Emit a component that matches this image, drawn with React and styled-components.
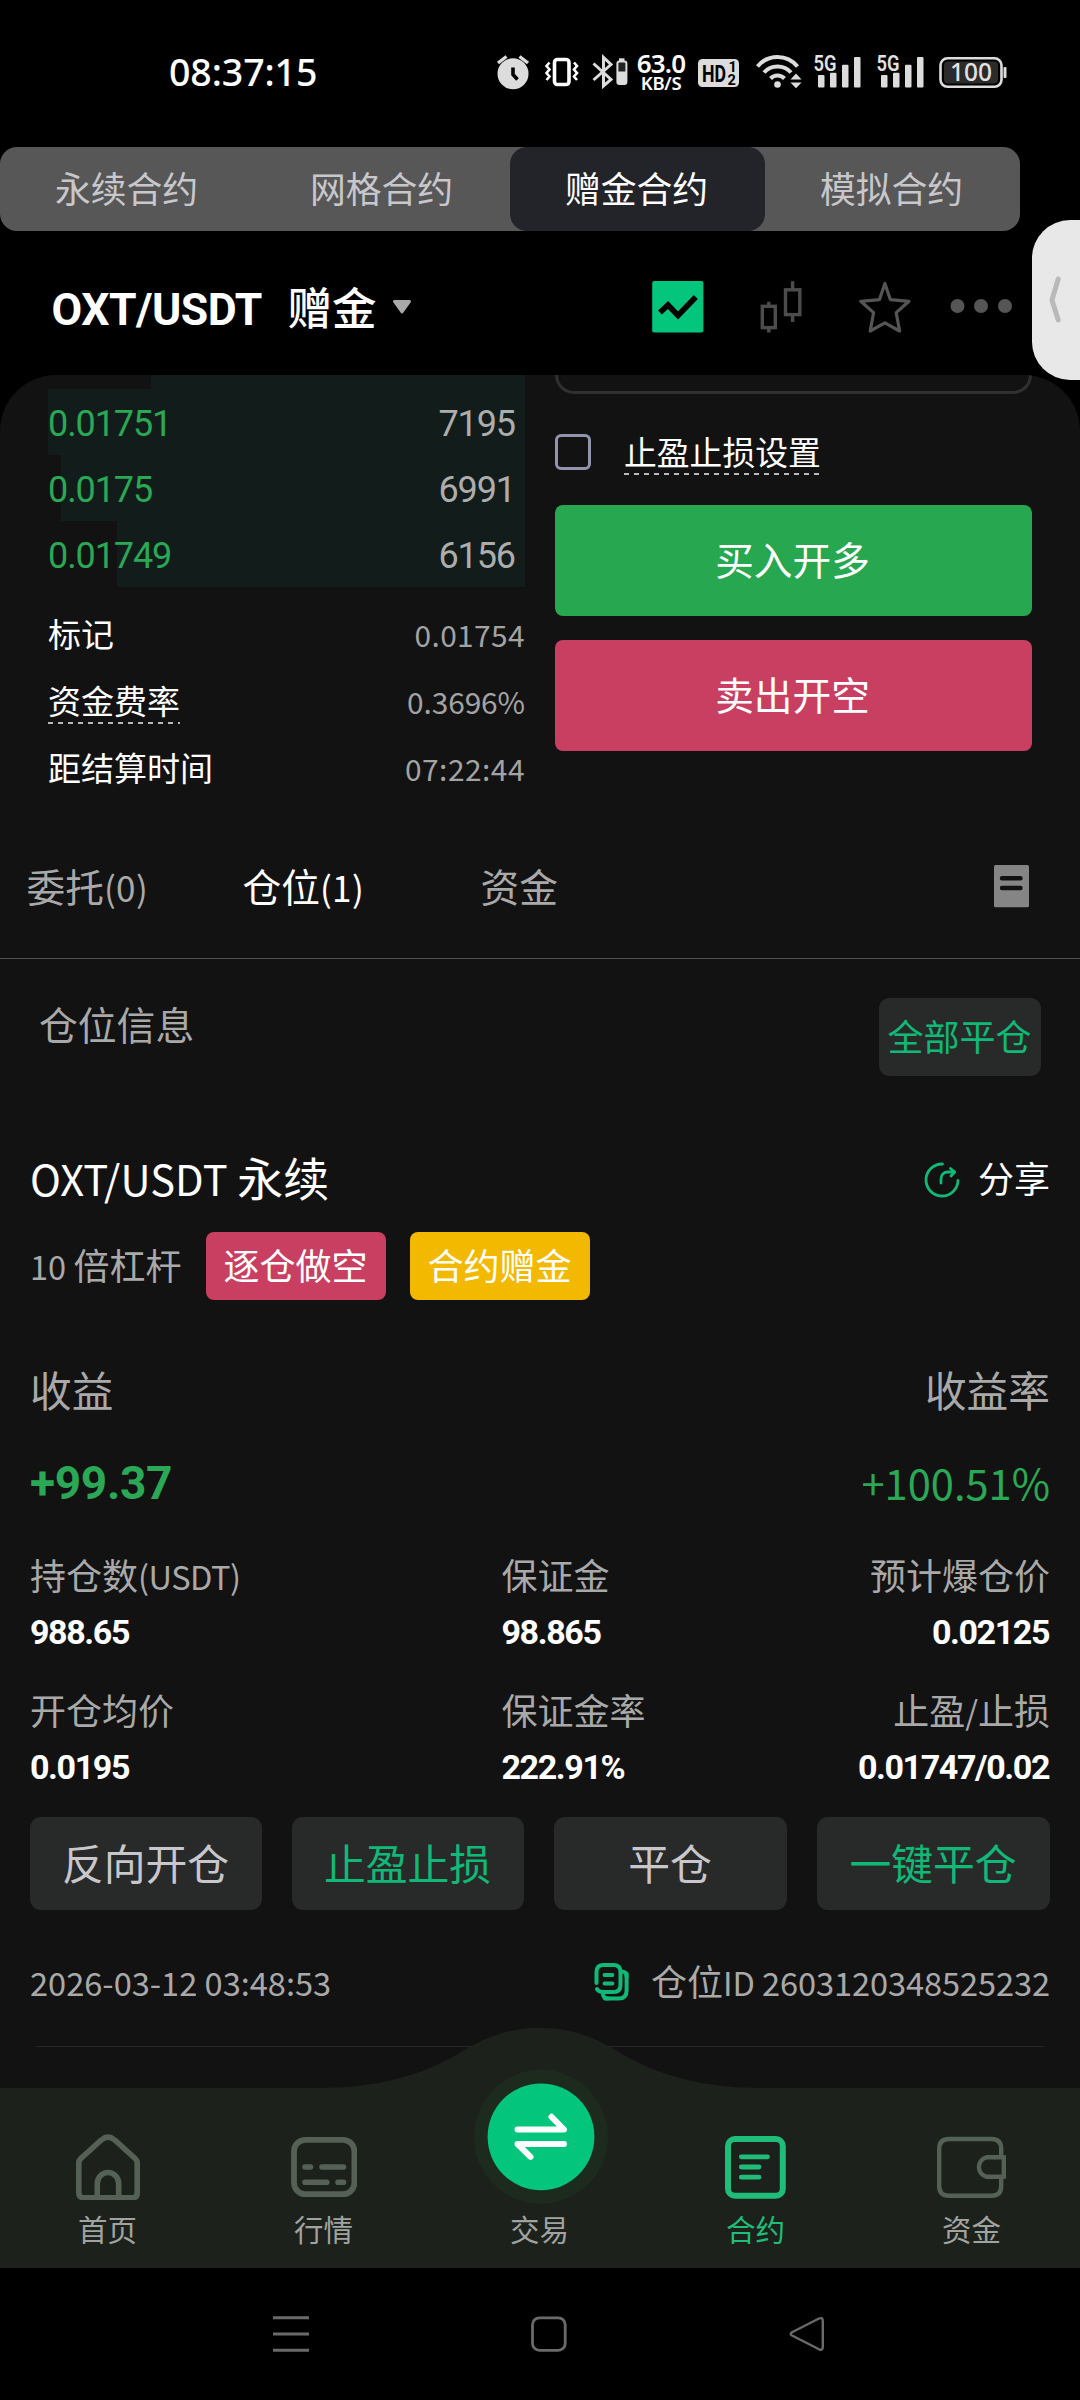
import React from 'react';
import styled, { createGlobalStyle } from 'styled-components';

const c = {
  page: '#000000',
  panel: '#121212',
  nav: '#1c211c',
  white: '#ffffff',
  muted: '#a9a9a9',
  lilac: '#c8c7cc',
  up: '#26a750',
  down: '#c93f62',
  accent: '#10b977',
  vivid: '#03c57b',
  gold: '#f3b900',
  chip: '#282929',
  navIcon: '#546154',
};

const GlobalStyle = createGlobalStyle`
  * { box-sizing: border-box; }
  html, body { margin: 0; padding: 0; background: ${c.page}; }
  body {
    width: 1080px;
    font-family: 'Noto Sans CJK SC', 'Noto Sans', sans-serif;
    color: ${c.white};
    -webkit-font-smoothing: antialiased;
  }
  svg { display: block; flex: none; }
`;

const Screen = styled.main`
  position: relative;
  width: 1080px;
  height: 2400px;
  display: flex;
  flex-direction: column;
  overflow: hidden;
  background: ${c.page};
  white-space: nowrap;
`;

const Latin = styled.span`
  font-size: 0.905em;
  line-height: 1;
  letter-spacing: ${(p) => p.$track || 0}px;
`;

/* ---------- status bar ---------- */

const StatusBar = styled.header`
  height: 147px;
  display: flex;
  align-items: flex-start;
  padding: 50px 0 0 169px;
`;

const Clock = styled.div`
  width: 327px;
  height: 46px;
  line-height: 44px;
  font-family: 'Noto Sans', sans-serif;
  font-size: 37.5px;
  font-weight: 500;
  letter-spacing: -0.1px;
`;

const StatusIcon = styled.svg`
  margin-left: ${(p) => p.$gap || 0}px;
`;

const NetSpeed = styled.div`
  width: 54px;
  height: 44px;
  margin-left: 5px;
  display: flex;
  flex-direction: column;
  align-items: center;
  font-family: 'Noto Sans', sans-serif;
  font-weight: 600;
`;

const SpeedValue = styled.span`
  height: 23px;
  margin-top: 2px;
  line-height: 23px;
  font-size: 26px;
  letter-spacing: -0.8px;
`;

const SpeedUnit = styled.span`
  height: 16px;
  line-height: 16px;
  font-size: 18.5px;
  letter-spacing: -0.3px;
`;

/* ---------- contract tabs ---------- */

const ContractTabs = styled.nav`
  width: 1020px;
  height: 84px;
  display: flex;
  border-radius: 17px;
  background: #575757;
`;

const ContractTab = styled.div`
  flex: 1;
  display: flex;
  align-items: center;
  justify-content: center;
  padding: 0 2px 5px 0;
  border-radius: 17px;
  font-size: 35.8px;
  color: ${(p) => (p.$active ? c.white : c.lilac)};
  background: ${(p) => (p.$active ? '#232429' : 'transparent')};
`;

/* ---------- pair header ---------- */

const PairHeader = styled.section`
  height: 144px;
  display: flex;
  align-items: flex-start;
  padding: 49px 0 0 51.5px;
`;

const PairName = styled.div`
  width: 236px;
  line-height: 60px;
  font-family: 'Roboto', sans-serif;
  font-weight: 700;
  font-size: 44.5px;
  letter-spacing: -0.5px;
`;

const PairKind = styled.div`
  width: 105px;
  margin-top: -4px;
  line-height: 60px;
  font-size: 44.5px;
  font-weight: 500;
`;

const HeaderIcons = styled.div`
  display: flex;
  align-items: center;
  margin-left: 239.5px;
`;

const EdgeHandle = styled.div`
  position: absolute;
  top: 220px;
  right: 0;
  width: 48px;
  height: 160px;
  display: flex;
  align-items: center;
  padding-left: 14px;
  border-radius: 38px 0 0 38px;
  background: #e8e8e8;
`;

/* ---------- trading panel ---------- */

const Panel = styled.section`
  flex: none;
  height: 1713px;
  overflow: hidden;
  border-radius: 56px 56px 0 0;
  background: ${c.panel};
`;

const TradeRow = styled.div`
  height: 443px;
  display: flex;
  gap: 30px;
  padding: 0 48px;
`;

const Column = styled.div`
  flex: 1;
  display: flex;
  flex-direction: column;
`;

const DepthRow = styled.div`
  height: ${(p) => p.$height || 66}px;
  display: flex;
  justify-content: space-between;
  align-items: center;
  padding: 4px 10px 0 0;
  font-family: 'Roboto', sans-serif;
  font-size: 36px;
  letter-spacing: -1.1px;
  color: #adadad;
  background: linear-gradient(to left, #121d1b ${(p) => p.$fill}px, transparent ${(p) => p.$fill}px);
`;

const Price = styled.span`
  color: #2aa856;
`;

const InfoList = styled.div`
  margin-top: 12.5px;
`;

const InfoRow = styled.div`
  height: 67px;
  display: flex;
  justify-content: space-between;
  align-items: center;
  font-size: 33px;
  line-height: 48px;
`;

const InfoValue = styled.span`
  color: #a3a3a3;
`;

const Dashed = styled.span`
  margin-top: ${(p) => p.$lift || 0}px;
  background: repeating-linear-gradient(to right, #b9b9b9 0 5px, transparent 5px 10px) left bottom / 100% 2px no-repeat;
`;

const InputTail = styled.div`
  height: 19px;
  border: 3px solid #303030;
  border-top: 0;
  border-radius: 0 0 20px 20px;
`;

const CheckRow = styled.div`
  height: 36px;
  margin: 40px 0 35px;
  display: flex;
  align-items: center;
  gap: 33px;
  font-size: 32.8px;
  line-height: 48px;
`;

const Checkbox = styled.span`
  width: 36px;
  height: 36px;
  border: 3px solid #9294ae;
  border-radius: 6px;
`;

const TradeButton = styled.button`
  height: 111px;
  margin: 0 0 24px;
  padding: 0 2px 6px 0;
  border: 0;
  border-radius: 8px;
  font: inherit;
  font-size: 38.7px;
  color: ${c.white};
  background: ${(p) => (p.$side === 'buy' ? c.up : c.down)};
`;

const OrderTabs = styled.nav`
  height: 141px;
  display: flex;
  align-items: center;
  padding: 0 51px 0 26.5px;
  border-bottom: 1px solid #505050;
  font-size: 38.7px;
`;

const OrderTab = styled.div`
  flex: 0 0 ${(p) => p.$width}px;
  padding-bottom: 7px;
  color: ${(p) => (p.$active ? c.white : c.muted)};
`;

const TabSpacer = styled.div`
  flex: 1;
`;

/* ---------- position card ---------- */

const PositionsHead = styled.div`
  height: 117px;
  display: flex;
  justify-content: space-between;
  padding: 39px 39px 0;
`;

const PositionsTitle = styled.h2`
  margin: 0;
  height: 51px;
  line-height: 51px;
  font-size: 38.8px;
  font-weight: 400;
  color: ${c.muted};
`;

const Chip = styled.button`
  height: ${(p) => p.$h}px;
  width: ${(p) => p.$w || 'auto'};
  padding: 0 1px 4px 0;
  border: 0;
  border-radius: ${(p) => p.$r}px;
  font: inherit;
  font-size: ${(p) => p.$size}px;
  color: ${(p) => (p.$accent ? c.accent : c.lilac)};
  background: ${c.chip};
`;

const Card = styled.article`
  padding: 73px 30px 0;
  color: ${c.muted};
`;

const TitleRow = styled.div`
  height: 61px;
  display: flex;
  align-items: center;
  justify-content: space-between;
  color: ${c.white};
`;

const PositionName = styled.h3`
  margin: 0;
  padding-bottom: 6px;
  line-height: 55px;
  font-size: 46px;
  font-weight: 400;
`;

const Share = styled.div`
  display: flex;
  align-items: center;
  gap: 18px;
  font-size: 36px;
`;

const ShareLabel = styled.span`
  padding-bottom: 6px;
`;

const TagRow = styled.div`
  height: 68px;
  margin-top: 22px;
  display: flex;
  align-items: center;
  font-size: 36px;
`;

const Leverage = styled.span`
  width: 176px;
  padding-bottom: 4px;
`;

const Tag = styled.span`
  width: 180px;
  height: 68px;
  margin-right: 24px;
  padding-right: 1px;
  text-align: center;
  line-height: 64px;
  border-radius: 8px;
  color: ${c.white};
  background: ${(p) => p.$bg};
`;

const SplitRow = styled.div`
  height: 62px;
  margin-top: ${(p) => p.$top}px;
  display: flex;
  align-items: center;
  justify-content: space-between;
  font-size: ${(p) => p.$size}px;
  line-height: 62px;
  padding-bottom: 4px;
`;

const ProfitRow = styled(SplitRow)`
  padding-bottom: 3px;
  color: #2aa856;
`;

const Profit = styled.span`
  font-family: 'Roboto', sans-serif;
  font-weight: 700;
  letter-spacing: -0.3px;
`;

const Metrics = styled.div`
  margin-top: 33px;
  display: grid;
  grid-template-columns: 471.5px 1fr auto;
  row-gap: 23px;
`;

const Metric = styled.div`
  text-align: ${(p) => p.$align || 'left'};
`;

const MetricLabel = styled.div`
  height: 56px;
  line-height: 53px;
  font-size: 36px;
`;

const MetricValue = styled.div`
  height: 56px;
  line-height: 57px;
  font-family: 'Roboto', sans-serif;
  font-weight: 700;
  font-size: 34px;
  letter-spacing: -1.4px;
  padding-right: 1px;
  color: ${c.white};
`;

const Actions = styled.div`
  margin-top: 22px;
  display: grid;
  grid-template-columns: 232px 232px 233px 233px;
  gap: 30px;
`;

const MetaRow = styled.div`
  height: 60px;
  margin-top: 42px;
  display: flex;
  align-items: center;
  justify-content: space-between;
  font-size: 36px;
`;

const MetaText = styled.span`
  padding-bottom: 4px;
`;

const PositionId = styled.div`
  display: flex;
  align-items: center;
  gap: 21px;
`;

const Rule = styled.hr`
  height: 1px;
  margin: 34px 6px 0;
  border: 0;
  background: #262828;
`;

/* ---------- bottom navigation ---------- */

const BottomNav = styled.nav`
  position: relative;
  flex: none;
  height: 180px;
  display: grid;
  grid-template-columns: repeat(5, 1fr);
  background: ${c.nav};
`;

const Bulge = styled.svg`
  position: absolute;
  left: 320px;
  top: -61px;
`;

const NavItem = styled.div`
  position: relative;
  display: flex;
  flex-direction: column;
  align-items: center;
  padding: 46px 0 0;
  font-size: 29.5px;
  line-height: 40px;
  color: ${(p) => (p.$active ? '#20bd7a' : '#a0a3a0')};
`;

const NavLabel = styled.span`
  margin-top: 8px;
  padding-right: 1px;
`;

const TradeItem = styled(NavItem)`
  padding-top: 112px;
`;

const TradeOrb = styled.svg`
  position: absolute;
  left: 41px;
  top: -19px;
`;

const SystemNav = styled.footer`
  height: 132px;
  display: flex;
  align-items: center;
  padding-left: 272px;
`;

/* ---------- drawings ---------- */

const SignalBars = ({ gap }) => (
  <StatusIcon $gap={gap} width="59" height="44" viewBox="0 0 59 44">
    <text x="8.5" y="20.5" fontFamily="Roboto, sans-serif" fontSize="21.5" fontWeight="600" fill="#e2e2e2" textLength="23" lengthAdjust="spacingAndGlyphs">5G</text>
    <g fill="#dcdcdc">
      <rect x="13" y="25" width="6.5" height="12.5" rx="1" />
      <rect x="25" y="22.7" width="6.5" height="14.8" rx="1" />
      <rect x="37" y="14.7" width="6.5" height="22.8" rx="1" />
      <rect x="49" y="7" width="6.5" height="30.5" rx="1" />
    </g>
  </StatusIcon>
);

const StatusIcons = () => (
  <>
    <StatusIcon width="34" height="44" viewBox="0 0 34 44">
      <circle cx="17" cy="23.7" r="15.5" fill="#dcdcdc" />
      <path d="M2 13 L10.5 6.5 M32 13 L23.5 6.5" stroke="#dcdcdc" strokeWidth="3.4" />
      <path d="M17 17.5 V24.5 L21.5 29.5" fill="none" stroke="#000" strokeWidth="3.6" />
    </StatusIcon>
    <StatusIcon $gap={13} width="36" height="44" viewBox="0 0 36 44">
      <rect x="11.5" y="9.5" width="14.5" height="25" rx="3" fill="none" stroke="#fff" strokeWidth="3.6" />
      <path d="M6.5 12.5 L3.5 16 L6.5 19.5 L3.5 23 L6.5 26.5 L3.5 30 M31 12.5 L34 16 L31 19.5 L34 23 L31 26.5 L34 30" fill="none" stroke="#fff" strokeWidth="2.6" />
    </StatusIcon>
    <StatusIcon $gap={12} width="38" height="44" viewBox="0 0 38 44">
      <path d="M2.5 13.5 L20 29.5 L12.5 36 V7.5 L20 14.5 L2.5 30" fill="none" stroke="#dcdcdc" strokeWidth="3" />
      <rect x="28" y="8.3" width="5.5" height="3" fill="#dcdcdc" />
      <rect x="26.4" y="11.5" width="9" height="22.5" rx="2" fill="#222" stroke="#dcdcdc" strokeWidth="2" />
      <path d="M26.4 21.5 H35.4 V34 H26.4 Z" fill="#dcdcdc" />
    </StatusIcon>
    <NetSpeed>
      <SpeedValue>63.0</SpeedValue>
      <SpeedUnit>KB/S</SpeedUnit>
    </NetSpeed>
    <StatusIcon $gap={10} width="42" height="44" viewBox="0 0 42 44">
      <rect x="0" y="9" width="41" height="28" rx="4.5" fill="#dcdcdc" />
      <g fontFamily="Roboto, sans-serif" fontWeight="700" fill="#000">
        <text x="4" y="31.5" fontSize="23.5" textLength="24" lengthAdjust="spacingAndGlyphs">HD</text>
        <text x="30.5" y="22" fontSize="14.5">1</text>
        <text x="29.5" y="34.5" fontSize="14.5">2</text>
      </g>
    </StatusIcon>
    <StatusIcon $gap={16} width="46" height="44" viewBox="0 0 46 44">
      <g fill="none" stroke="#dcdcdc" strokeWidth="4">
        <path d="M1.5 16.5 C12 3.8 31 3.8 41.5 16.5" />
        <path d="M8 22.5 C15 14.5 28 14.5 35 22.5" />
        <path d="M14.5 28.5 C18.5 24.4 24.5 24.4 28.5 28.5" />
      </g>
      <circle cx="21.5" cy="34.5" r="3.3" fill="#dcdcdc" />
      <path d="M34.5 29.5 L40 23.5 L45.5 29.5 Z M34.5 32.5 L40 38.2 L45.5 32.5 Z" fill="#dcdcdc" />
    </StatusIcon>
    <SignalBars gap={2.5} />
    <SignalBars gap={4} />
    <StatusIcon $gap={12.5} width="70" height="44" viewBox="0 0 70 44">
      <rect x="1.5" y="8.3" width="61" height="28.5" rx="7" fill="#000" stroke="#dcdcdc" strokeWidth="2.6" />
      <rect x="5" y="11.5" width="54" height="22" rx="4" fill="#2b2b2b" />
      <rect x="64.5" y="17" width="3" height="11" rx="1" fill="#dcdcdc" />
      <text x="11" y="31.2" fontFamily="'Noto Sans', sans-serif" fontSize="24.5" fontWeight="500" fill="#e2e2e2" textLength="42">100</text>
    </StatusIcon>
  </>
);

const Caret = () => (
  <svg width="20" height="60" viewBox="0 0 20 60">
    <path d="M1.5 21.5 H16.5 L9 32 Z" fill="#a9a9a9" stroke="#a9a9a9" strokeWidth="3" strokeLinejoin="round" />
  </svg>
);

const PairIcons = () => (
  <HeaderIcons>
    <svg width="52" height="54" viewBox="0 0 52 54">
      <rect x="0.2" y="1" width="51.2" height="51.5" rx="2" fill={c.vivid} />
      <path d="M8 32.5 L16 25 L26 35.5 L43.8 17" fill="none" stroke="#000" strokeWidth="5.6" />
    </svg>
    <svg width="155" height="54" viewBox="705 280 155 54">
      <g fill="none" stroke="#4c4c4c" strokeWidth="3.4">
        <rect x="763.3" y="306.3" width="13" height="21.3" />
        <path d="M769.8 301.7 V306 M769.8 328 V332.4" />
        <rect x="786.5" y="289.8" width="14.3" height="24.8" />
        <path d="M793.6 281.3 V289 M793.6 315 V322" />
      </g>
    </svg>
    <svg width="52" height="54" viewBox="859 280 52 54">
      <path d="M884.9 283.5 L890.3 299.6 L909 301.3 L896.2 312.6 L899.6 331 L884.9 322.8 L870.2 331 L873.6 312.6 L860.8 301.3 L879.5 299.6 Z" fill="none" stroke="#555" strokeWidth="3.2" strokeLinejoin="round" />
    </svg>
    <svg width="102" height="54" viewBox="911 280 102 54">
      <g fill="#555">
        <circle cx="957.5" cy="306" r="7" />
        <circle cx="981" cy="306" r="7" />
        <circle cx="1005" cy="306" r="7" />
      </g>
    </svg>
  </HeaderIcons>
);

const HandleArrow = () => (
  <svg width="20" height="56" viewBox="0 0 20 56">
    <path d="M12.2 7 L6 28 L12.2 48" fill="none" stroke="#b9b9b9" strokeWidth="5" strokeLinecap="round" strokeLinejoin="round" />
  </svg>
);

const HistoryIcon = () => (
  <svg width="35" height="46" viewBox="0 0 35 46">
    <rect x="0" y="0" width="35" height="42.3" rx="1.5" fill="#858585" />
    <path d="M8 13.2 H26.5 M8 23 H26.5" stroke={c.panel} strokeWidth="4.4" strokeLinecap="round" />
  </svg>
);

const ShareIcon = () => (
  <svg width="36" height="36" viewBox="0 0 36 36">
    <g fill="none" stroke={c.accent} strokeWidth="2.8" strokeLinecap="round" strokeLinejoin="round">
      <path d="M18.5 2 A16 16 0 1 0 34 18.5" />
      <path d="M17 21 V17 C17 12.5 20 10 24 10 H30" />
      <path d="M26.5 6.5 L30.7 10 L27 14" />
    </g>
  </svg>
);

const CopyIcon = () => (
  <svg width="36" height="40" viewBox="0 0 36 40">
    <g fill="none" stroke={c.accent} strokeWidth="4" strokeLinecap="round">
      <path d="M2.5 21 V10 Q2.5 3 9.5 3 H19.5 Q26.5 3 26.5 10 V23 Q26.5 30 19.5 30 H9.5 Q4.5 30 3 27" />
      <path d="M32.6 11.5 V28.5 Q32.6 36.5 24.6 36.5 H11" />
      <path d="M27 9.5 Q32.6 9 32.6 15" />
      <path d="M9 33 Q10 36.5 14 36.5" />
      <path d="M10.5 13 H18.5 M10.5 21.5 H18.5" strokeWidth="3.8" />
    </g>
  </svg>
);

const HomeIcon = () => (
  <svg width="66" height="66" viewBox="0 0 66 66">
    <g fill="none" stroke={c.navIcon} strokeWidth="5.6" strokeLinejoin="round">
      <path d="M3.8 29 Q3.8 26.5 5.6 24.8 L26.5 5.8 Q33 0.5 39.5 5.8 L60.4 24.8 Q62.2 26.5 62.2 29 V59 Q62.2 63.7 57.5 63.7 H8.5 Q3.8 63.7 3.8 59 Z" />
      <path d="M22.3 62 V49.5 A10.7 11 0 0 1 43.7 49.5 V62" />
    </g>
  </svg>
);

const MarketIcon = () => (
  <svg width="66" height="66" viewBox="0 0 66 66">
    <rect x="3" y="5.8" width="60.4" height="54.4" rx="11.5" fill="none" stroke={c.navIcon} strokeWidth="5.8" />
    <path d="M14 33 H19.5 M31 33 H52.5 M14 48.3 H35.8 M47 48.3 H52.5" stroke={c.navIcon} strokeWidth="5.6" strokeLinecap="round" />
  </svg>
);

const ContractIcon = () => (
  <svg width="62" height="66" viewBox="0 0 62 66">
    <g fill="none" stroke="#20bd7a">
      <rect x="3" y="5" width="54.8" height="56.8" rx="7" strokeWidth="6" />
      <path d="M16.3 22.8 H42.5 M16.3 33 H34 M16.3 43.2 H34" strokeWidth="4.8" strokeLinecap="round" />
    </g>
  </svg>
);

const WalletIcon = () => (
  <svg width="72" height="66" viewBox="0 0 72 66">
    <g fill="none" stroke={c.navIcon} strokeWidth="4.4">
      <path d="M65.2 22 V15 Q65.2 5 55.5 5 H13 Q3.2 5 3.2 15 V52 Q3.2 61.8 13 61.8 H55.5 Q65.2 61.8 65.2 52 V44" />
      <path d="M67.5 23.3 H50.5 A10 10 0 0 0 50.5 42.7 H67.5 M67.8 21.3 V44.7" />
    </g>
  </svg>
);

const bids = [
  { price: '0.01751', size: '7195', fill: 477 },
  { price: '0.0175', size: '6991', fill: 463.5 },
  { price: '0.01749', size: '6156', fill: 407.5 },
];

const metrics = [
  { label: <>持仓数<Latin $track={-0.5}>(USDT)</Latin></>, value: '988.65' },
  { label: '保证金', value: '98.865' },
  { label: '预计爆仓价', value: '0.02125', align: 'right' },
  { label: '开仓均价', value: '0.0195' },
  { label: '保证金率', value: '222.91%' },
  { label: <>止盈<Latin>/</Latin>止损</>, value: '0.01747/0.02', align: 'right' },
];

export default function App() {
  return (
    <>
      <GlobalStyle />
      <Screen>
        <StatusBar>
          <Clock>08:37:15</Clock>
          <StatusIcons />
        </StatusBar>

        <ContractTabs>
          {['永续合约', '网格合约', '赠金合约', '模拟合约'].map((t) => (
            <ContractTab key={t} $active={t === '赠金合约'}>{t}</ContractTab>
          ))}
        </ContractTabs>

        <PairHeader>
          <PairName>OXT/USDT</PairName>
          <PairKind>赠金</PairKind>
          <Caret />
          <PairIcons />
        </PairHeader>

        <Panel>
          <TradeRow>
            <Column>
              <DepthRow $height={14} $fill={373.5} />
              {bids.map((b) => (
                <DepthRow key={b.price} $fill={b.fill}>
                  <Price>{b.price}</Price>
                  <span>{b.size}</span>
                </DepthRow>
              ))}
              <InfoList>
                <InfoRow>
                  <span>标记</span>
                  <InfoValue><Latin $track={0.4}>0.01754</Latin></InfoValue>
                </InfoRow>
                <InfoRow>
                  <Dashed>资金费率</Dashed>
                  <InfoValue><Latin $track={-0.1}>0.3696%</Latin></InfoValue>
                </InfoRow>
                <InfoRow>
                  <span>距结算时间</span>
                  <InfoValue><Latin $track={0.5}>07:22:44</Latin></InfoValue>
                </InfoRow>
              </InfoList>
            </Column>
            <Column>
              <InputTail />
              <CheckRow>
                <Checkbox />
                <Dashed $lift={-3}>止盈止损设置</Dashed>
              </CheckRow>
              <TradeButton $side="buy">买入开多</TradeButton>
              <TradeButton $side="sell">卖出开空</TradeButton>
            </Column>
          </TradeRow>

          <OrderTabs>
            <OrderTab $width={216}>委托<Latin $track={0.4}>(0)</Latin></OrderTab>
            <OrderTab $width={238} $active>仓位<Latin $track={0.4}>(1)</Latin></OrderTab>
            <OrderTab $width={80}>资金</OrderTab>
            <TabSpacer />
            <HistoryIcon />
          </OrderTabs>

          <PositionsHead>
            <PositionsTitle>仓位信息</PositionsTitle>
            <Chip $w="162px" $h={78} $r={10} $size={36} $accent>全部平仓</Chip>
          </PositionsHead>

          <Card>
            <TitleRow>
              <PositionName><Latin $track={0.1}>OXT/USDT </Latin>永续</PositionName>
              <Share>
                <ShareIcon />
                <ShareLabel>分享</ShareLabel>
              </Share>
            </TitleRow>
            <TagRow>
              <Leverage><Latin>10 </Latin>倍杠杆</Leverage>
              <Tag $bg={c.down}>逐仓做空</Tag>
              <Tag $bg={c.gold}>合约赠金</Tag>
            </TagRow>

            <SplitRow $top={60} $size={41.7}>
              <span>收益</span>
              <span>收益率</span>
            </SplitRow>
            <ProfitRow $top={31} $size={46}>
              <Profit>+99.37</Profit>
              <Latin>+100.51%</Latin>
            </ProfitRow>

            <Metrics>
              {metrics.map((m) => (
                <Metric key={m.value} $align={m.align}>
                  <MetricLabel>{m.label}</MetricLabel>
                  <MetricValue>{m.value}</MetricValue>
                </Metric>
              ))}
            </Metrics>

            <Actions>
              <Chip $h={93} $r={11} $size={41.8}>反向开仓</Chip>
              <Chip $h={93} $r={11} $size={41.8} $accent>止盈止损</Chip>
              <Chip $h={93} $r={11} $size={41.8}>平仓</Chip>
              <Chip $h={93} $r={11} $size={41.8} $accent>一键平仓</Chip>
            </Actions>

            <MetaRow>
              <MetaText><Latin>2026-03-12 03:48:53</Latin></MetaText>
              <PositionId>
                <CopyIcon />
                <MetaText>仓位<Latin $track={-0.08}>ID 2603120348525232</Latin></MetaText>
              </PositionId>
            </MetaRow>
            <Rule />
          </Card>
        </Panel>

        <BottomNav>
          <Bulge width="440" height="62" viewBox="320 2027 440 62">
            <path d="M320 2089 V2088 C375 2088 425 2075 462 2051.5 C487 2036 512 2027.7 540 2027.7 C568 2027.7 593 2036 618 2051.5 C655 2075 705 2088 760 2088 V2089 Z" fill={c.nav} />
          </Bulge>
          <NavItem>
            <HomeIcon />
            <NavLabel>首页</NavLabel>
          </NavItem>
          <NavItem>
            <MarketIcon />
            <NavLabel>行情</NavLabel>
          </NavItem>
          <TradeItem>
            <TradeOrb width="136" height="136" viewBox="0 0 136 136">
              <circle cx="68" cy="67.8" r="67" fill="#1d2a1e" />
              <circle cx="68" cy="67.8" r="53.4" fill={c.vivid} />
              <path d="M44.5 60.5 H91 L78.5 47.8 M91 75 H44.5 L57.5 87.8" fill="none" stroke="#fff" strokeWidth="6" strokeLinecap="round" strokeLinejoin="round" />
            </TradeOrb>
            <NavLabel>交易</NavLabel>
          </TradeItem>
          <NavItem $active>
            <ContractIcon />
            <NavLabel>合约</NavLabel>
          </NavItem>
          <NavItem>
            <WalletIcon />
            <NavLabel>资金</NavLabel>
          </NavItem>
        </BottomNav>

        <SystemNav>
          <svg width="258" height="40" viewBox="272 2314 258 40">
            <path d="M273 2317.7 H309 M273 2334 H309 M273 2350.3 H309" stroke="#6a6a6a" strokeWidth="3" />
          </svg>
          <svg width="258" height="40" viewBox="530 2314 258 40">
            <rect x="532.5" y="2317.8" width="32.7" height="32.6" rx="7" fill="none" stroke="#6a6a6a" strokeWidth="2.8" />
          </svg>
          <svg width="40" height="40" viewBox="788 2314 40 40">
            <path d="M792 2332.3 L819 2318.5 Q822.8 2317 822.8 2321 V2347 Q822.8 2351 819 2349.3 L792 2335.5 Q789.5 2334 792 2332.3 Z" fill="none" stroke="#6a6a6a" strokeWidth="2.4" strokeLinejoin="round" />
          </svg>
        </SystemNav>

        <EdgeHandle>
          <HandleArrow />
        </EdgeHandle>
      </Screen>
    </>
  );
}
